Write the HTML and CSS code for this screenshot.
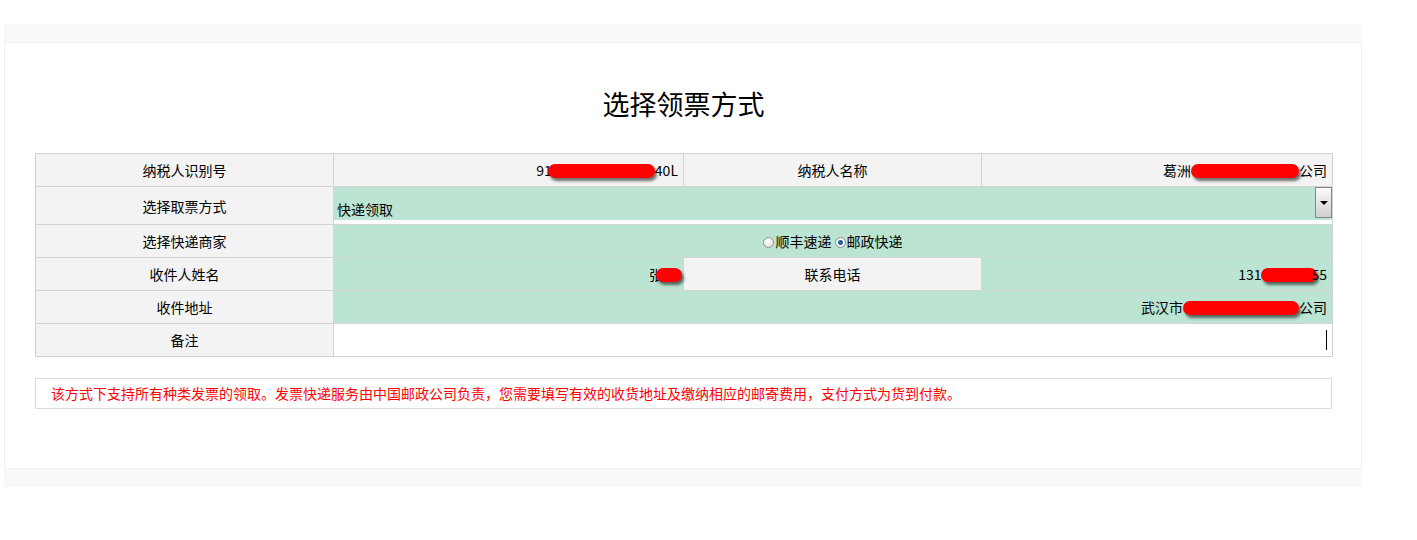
FILE: index.html
```html
<!DOCTYPE html>
<html>
	<head>
		<meta charset="utf-8" />
		<title>选择领票方式</title>
	<link rel="stylesheet" href="styles.css">
	</head>
	<body>
	<div class="page">
		<div class="panel">
			<h1 class="title">选择领票方式</h1>
			<table class="form">
				<colgroup>
					<col class="c1"><col class="c2"><col class="c3"><col class="c4">
				</colgroup>
				<tr class="row">
					<td class="label">纳税人识别号</td>
					<td class="value grey">91<span class="blob b1"></span>40L</td>
					<td class="label">纳税人名称</td>
					<td class="value grey">葛洲<span class="blob b2"></span>公司</td>
				</tr>
				<tr class="row tall">
					<td class="label">选择取票方式</td>
					<td class="selcell" colspan="3">
						<div class="select">
							<span class="seltext">快递领取</span>
							<span class="arrow"></span>
						</div>
					</td>
				</tr>
				<tr class="row">
					<td class="label">选择快递商家</td>
					<td class="green center" colspan="3">
						<label class="opt"><input type="radio" name="kd">顺丰速递</label>
						<label class="opt"><input type="radio" name="kd" checked>邮政快递</label>
					</td>
				</tr>
				<tr class="row">
					<td class="label">收件人姓名</td>
					<td class="value green">张<span class="blob b3"></span></td>
					<td class="label">联系电话</td>
					<td class="value green">131<span class="blob b4"></span>55</td>
				</tr>
				<tr class="row">
					<td class="label">收件地址</td>
					<td class="value green" colspan="3">武汉市<span class="blob b5"></span>公司</td>
				</tr>
				<tr class="row">
					<td class="label">备注</td>
					<td class="remark" colspan="3"><span class="caret"></span></td>
				</tr>
			</table>
			<div class="notice">该方式下支持所有种类发票的领取。发票快递服务由中国邮政公司负责，您需要填写有效的收货地址及缴纳相应的邮寄费用，支付方式为货到付款。</div>
		</div>
	</div>
	</body>
</html>
```

FILE: styles.css
```css
body{
	margin: 0;
	font-family: "Noto Sans CJK SC", "Liberation Sans", sans-serif;
	font-size: 14px;
	color: #000;
}
.page{
	width: 1358px;
	margin: 24px 0 0 4px;
	padding: 18px 0;
	background: #f9f9f9;
}
.panel{
	background: #fff;
	border: 1px solid #efefef;
	height: 425px;
	padding: 0 29px 0 30px;
}
.title{
	margin: 43px 0 31px;
	font-size: 27px;
	font-weight: normal;
	line-height: 36px;
	text-align: center;
}
.form{
	width: 100%;
	border-collapse: collapse;
	table-layout: fixed;
}
.c1{ width: 298px; }
.c2{ width: 350px; }
.c3{ width: 298px; }
.c4{ width: 351px; }
.form td{
	border: 1px solid #d3d3d3;
	height: 32px;
	padding: 0 5px;
	line-height: 16px;
	white-space: nowrap;
}
.form .tall td{
	height: 37px;
}
.label{
	background: #f3f3f3;
	text-align: center;
}
.value{
	text-align: right;
}
.grey{
	background: #f3f3f3;
}
.green{
	background: #bbe4d3;
}
.center{
	text-align: center;
}
.selcell{
	background: #fff;
	vertical-align: top;
}
.form td.selcell{
	padding: 0;
}
.select{
	height: 33px;
	background: #bbe4d3;
	position: relative;
}
.seltext{
	position: absolute;
	left: 3px;
	top: 14px;
}
.arrow{
	position: absolute;
	right: 0;
	top: 0;
	width: 15px;
	height: 29px;
	border: 1px solid #858585;
	background: linear-gradient(#fdfdfd, #e4e4e4 50%, #cfcfcf);
}
.arrow:after{
	content: "";
	position: absolute;
	left: 4px;
	top: 13px;
	border-left: 4px solid transparent;
	border-right: 4px solid transparent;
	border-top: 4px solid #000;
}
.opt input{
	-webkit-appearance: none;
	appearance: none;
	width: 11px;
	height: 11px;
	margin: 0 1px 0 0;
	border: 1px solid #8f8f8f;
	border-radius: 50%;
	background: radial-gradient(circle at 40% 35%, #fff, #d8d8d8);
	vertical-align: -1px;
}
.opt input:checked{
	background: radial-gradient(circle, #2d6fa8 0, #1f5c93 2px, #fff 3px, #d8d8d8);
}
.blob{
	display: inline-block;
	height: 14px;
	background: #ff0000;
	border-radius: 7px;
	box-shadow: 2px 3px 3px rgba(0,0,0,0.55);
	vertical-align: -2px;
}
.b1{ width: 107px; margin-left: -4px; }
.b2{ width: 108px; }
.b3{ width: 26px; margin-left: -7px; margin-right: -4px; }
.b4{ width: 56px; margin-right: -6px; }
.b5{ width: 116px; }
.remark{
	background: #fff;
	text-align: right;
}
.caret{
	display: inline-block;
	width: 1px;
	height: 20px;
	background: #000;
	vertical-align: middle;
}
.notice{
	margin-top: 21px;
	border: 1px solid #ddd;
	height: 29px;
	line-height: 29px;
	padding-left: 15px;
	color: #ff0000;
}
```
